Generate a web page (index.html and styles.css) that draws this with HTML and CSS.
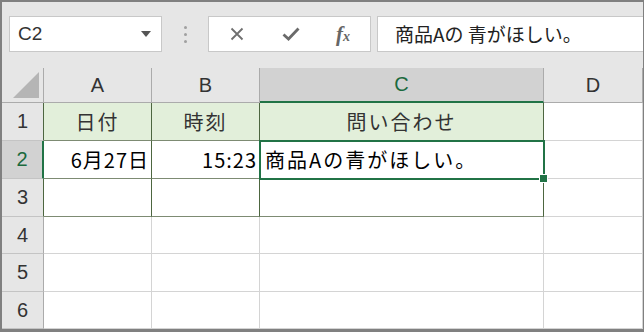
FILE: index.html
```html
<!DOCTYPE html>
<html lang="ja">
<head>
  <meta charset="UTF-8" />
  <meta name="viewport" content="width=device-width, initial-scale=1" />
  <title>Excel シート</title>
  <link rel="stylesheet" href="styles.css">
</head>
<body>
  <div class="frame">
    <div class="toolbar">
      <div class="namebox">
        <span>C2</span>
        <svg class="caret" width="10" height="6" viewBox="0 0 10 6"><path d="M0 0H10L5 6Z" fill="#555"/></svg>
      </div>
      <div class="grip"><i></i><i></i><i></i></div>
      <div class="fbuttons">
        <svg width="14" height="14" viewBox="0 0 14 14"><path d="M1.5 1.5L12.5 12.5M12.5 1.5L1.5 12.5" stroke="#6f6f6f" stroke-width="1.8" fill="none"/></svg>
        <svg width="18" height="14" viewBox="0 0 18 14"><path d="M1.5 7.5L6.5 12L16.5 1.5" stroke="#6a6a6a" stroke-width="2.8" fill="none"/></svg>
        <span class="fx">f<sub>x</sub></span>
      </div>
      <div class="formula">商品Aの 青がほしい。</div>
    </div>

    <div class="sheet">
      <div class="corner"><svg width="26" height="26" viewBox="0 0 26 26"><path d="M26 0V26H0Z" fill="#b5b5b5"/></svg></div>
      <div class="colhead">A</div>
      <div class="colhead">B</div>
      <div class="colhead sel">C</div>
      <div class="colhead">D</div>

      <div class="rowhead tbl">1</div>
      <div class="cell tbl head">日付</div>
      <div class="cell tbl head">時刻</div>
      <div class="cell tbl head">問い合わせ</div>
      <div class="cell"></div>

      <div class="rowhead tbl sel">2</div>
      <div class="cell tbl num">6月27日</div>
      <div class="cell tbl num">15:23</div>
      <div class="cell tbl active">商品Aの青がほしい。</div>
      <div class="cell"></div>

      <div class="rowhead tbl">3</div>
      <div class="cell tbl"></div>
      <div class="cell tbl"></div>
      <div class="cell tbl"></div>
      <div class="cell"></div>

      <div class="rowhead">4</div>
      <div class="cell"></div>
      <div class="cell"></div>
      <div class="cell"></div>
      <div class="cell"></div>

      <div class="rowhead">5</div>
      <div class="cell"></div>
      <div class="cell"></div>
      <div class="cell"></div>
      <div class="cell"></div>

      <div class="rowhead">6</div>
      <div class="cell"></div>
      <div class="cell"></div>
      <div class="cell"></div>
      <div class="cell"></div>
    </div>
  </div>
</body>
</html>
```

FILE: styles.css
```css
* {
  box-sizing: border-box;
  margin: 0;
  padding: 0;
}

body {
  width: 644px;
  height: 332px;
  overflow: hidden;
  font-family: "Noto Sans CJK JP", "Noto Sans", sans-serif;
  color: #000;
}

.frame {
  width: 644px;
  height: 332px;
  border-style: solid;
  border-color: #808080;
  border-width: 2px 1px 3px 2px;
  background-color: #e6e6e6;
  overflow: hidden;
}

/* formula bar */
.toolbar {
  height: 66px;
  display: flex;
  align-items: flex-start;
  padding: 14px 0 0 7px;
}

.namebox {
  width: 153px;
  height: 36px;
  background-color: #fff;
  border: 1px solid #c8c8c8;
  display: flex;
  align-items: center;
  justify-content: space-between;
  padding: 0 10px 0 8px;
  font-family: "Liberation Sans", "Noto Sans", sans-serif;
  font-size: 19px;
  color: #333;
}

.grip {
  width: 46px;
  height: 36px;
  display: flex;
  flex-direction: column;
  align-items: center;
  justify-content: center;
  gap: 4px;
}

.grip i {
  width: 3px;
  height: 3px;
  border-radius: 50%;
  background-color: #a0a0a0;
}

.fbuttons {
  width: 163px;
  height: 36px;
  background-color: #fff;
  border: 1px solid #c8c8c8;
  display: flex;
  align-items: center;
  padding-left: 21px;
  gap: 38px;
}

.fx {
  font-family: "Liberation Serif", serif;
  font-style: italic;
  font-weight: bold;
  font-size: 21px;
  color: #666;
  margin-left: -2px;
}

.fx sub {
  font-size: 14px;
  vertical-align: 0;
}

.formula {
  flex: 1;
  height: 36px;
  margin-left: 6px;
  background-color: #fff;
  border: 1px solid #c8c8c8;
  border-right: none;
  padding-left: 17px;
  font-size: 19px;
  line-height: 34px;
  color: #222;
}

/* sheet grid */
.sheet {
  display: grid;
  grid-template-columns: 42px 108px 108px 284px 1fr;
  grid-template-rows: 35px 38px 38px 38px 37px 38px 37px;
  background-color: #fff;
}

.corner {
  background-color: #e6e6e6;
  border-right: 1px solid #ababab;
  border-bottom: 1px solid #ababab;
  display: flex;
  align-items: flex-end;
  justify-content: flex-end;
  padding: 0 4px 4px 0;
}

.colhead {
  background-color: #e6e6e6;
  border-right: 1px solid #ababab;
  border-bottom: 1px solid #ababab;
  display: flex;
  align-items: center;
  justify-content: center;
  font-family: "Liberation Sans", "Noto Sans", sans-serif;
  font-size: 20px;
  color: #333;
}

.colhead:last-child {
  border-right: none;
}

.colhead.sel {
  background-color: #d2d2d2;
  border-bottom: 2px solid #217346;
  color: #1b6a3e;
}

.rowhead {
  background-color: #e6e6e6;
  border-right: 1px solid #ababab;
  border-bottom: 1px solid #c4c4c4;
  display: flex;
  align-items: center;
  justify-content: center;
  font-family: "Liberation Sans", "Noto Sans", sans-serif;
  font-size: 20px;
  color: #333;
}

.rowhead.tbl {
  border-right-color: #4d6640;
}

.rowhead.sel {
  background-color: #d2d2d2;
  border-right: 2px solid #217346;
  color: #1b6a3e;
}

.cell {
  border-right: 1px solid #d4d4d4;
  border-bottom: 1px solid #d4d4d4;
  display: flex;
  align-items: center;
  padding: 0 4px;
  font-size: 20px;
  letter-spacing: 2px;
  white-space: nowrap;
}

.cell.tbl {
  border-right-color: #4d6640;
  border-bottom-color: #7d8b73;
}

.cell.head {
  background-color: #e2efda;
  justify-content: center;
  color: #333;
}

.cell.num {
  justify-content: flex-end;
  padding-right: 2px;
  letter-spacing: 1px;
}

.cell.active {
  position: relative;
  padding-left: 5px;
}

.cell.active::after {
  content: "";
  position: absolute;
  top: -1px;
  left: -1px;
  right: -2px;
  bottom: -2px;
  border: 2px solid #217346;
}

.cell.active::before {
  content: "";
  position: absolute;
  right: -5px;
  bottom: -5px;
  width: 7px;
  height: 7px;
  background-color: #217346;
  border: 1px solid #fff;
  z-index: 1;
}
```
